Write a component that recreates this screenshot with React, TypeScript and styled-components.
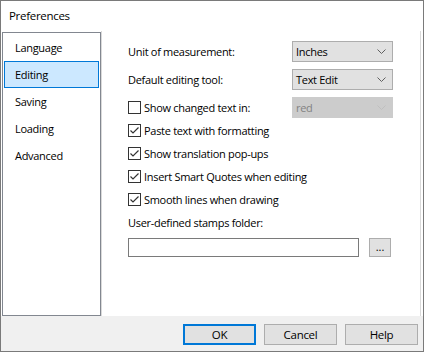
import React from "react";
import styled, { createGlobalStyle } from "styled-components";

const Global = createGlobalStyle`
  html, body { margin: 0; padding: 0; background: #ffffff; }
  body {
    font-family: "Open Sans", "Noto Sans", "Liberation Sans", sans-serif;
    font-size: 11px;
    letter-spacing: -0.3px;
    color: #000;
  }
  * { box-sizing: border-box; }
`;

const Window = styled.div`
  width: 424px;
  height: 352px;
  border: 1px solid #7a7a7a;
  background: #ffffff;
  display: flex;
  flex-direction: column;
`;

const TitleBar = styled.div`
  height: 30px;
  display: flex;
  align-items: center;
  padding-left: 8px;
  padding-bottom: 1px;
  font-size: 11.5px;
  color: #000;
`;

const Body = styled.div`
  display: flex;
  height: 285px;
  padding-left: 1px;
`;

const NavList = styled.div`
  width: 99px;
  height: 284px;
  margin-top: 1px;
  border: 1px solid #828790;
  padding: 1px;
  display: flex;
  flex-direction: column;
  background: #fff;
`;

const NavItem = styled.div<{ $selected?: boolean }>`
  height: 27px;
  display: flex;
  align-items: center;
  padding-left: 10px;
  font-size: 11px;
  border: 1px solid ${(p) => (p.$selected ? "#0078d7" : "transparent")};
  background: ${(p) => (p.$selected ? "#cce8ff" : "transparent")};
`;

const Panel = styled.div`
  width: 320px;
  height: 286px;
  border: 1px solid #dadada;
  border-top: none;
  padding: 10px 0 0 26px;
  display: flex;
  flex-direction: column;
`;

const FieldRow = styled.div<{ $tight?: boolean }>`
  height: 21px;
  margin-bottom: ${(p) => (p.$tight ? "1px" : "7px")};
  display: flex;
  align-items: center;
  justify-content: space-between;
  width: 265px;
`;

const Label = styled.span`
  font-size: 11px;
  color: #000;
`;

const Select = styled.div<{ $disabled?: boolean }>`
  width: 101px;
  height: 21px;
  border: 1px solid ${(p) => (p.$disabled ? "#cccccc" : "#adadad")};
  background: ${(p) => (p.$disabled ? "#cccccc" : "#e1e1e1")};
  color: ${(p) => (p.$disabled ? "#838383" : "#000")};
  display: flex;
  align-items: center;
  justify-content: space-between;
  padding: 0 6px 0 3px;
  font-size: 11px;
`;

const CheckRow = styled.div`
  height: 23px;
  display: flex;
  align-items: center;
  gap: 3px;
`;

const Box = styled.span`
  width: 13px;
  height: 13px;
  border: 1px solid #333333;
  background: #fff;
  display: inline-flex;
  align-items: center;
  justify-content: center;
`;

const FolderLabel = styled.div`
  height: 22px;
  display: flex;
  align-items: center;
`;

const FolderRow = styled.div`
  margin-top: 5px;
  display: flex;
  gap: 10px;
`;

const TextInput = styled.div`
  width: 231px;
  height: 19px;
  border: 1px solid #7a7a7a;
  background: #fff;
`;

const SmallButton = styled.div`
  width: 22px;
  height: 19px;
  border: 1px solid #adadad;
  background: #e1e1e1;
  display: flex;
  align-items: center;
  justify-content: center;
  font-size: 11px;
  letter-spacing: 0;
  padding-bottom: 3px;
`;

const ButtonBar = styled.div`
  flex: 1;
  background: #f0f0f0;
  display: flex;
  justify-content: flex-end;
  align-items: flex-start;
  gap: 8px;
  padding: 8px 5px 0 0;
`;

const Button = styled.div<{ $default?: boolean }>`
  width: 73px;
  height: 21px;
  border: ${(p) => (p.$default ? "2px solid #0078d7" : "1px solid #adadad")};
  background: #e1e1e1;
  display: flex;
  align-items: center;
  justify-content: center;
  font-size: 11.5px;
`;

const Chevron = ({ color }: { color: string }) => (
  <svg width="9" height="5" viewBox="0 0 9 5">
    <path d="M0.5 0.5 L4.5 4.5 L8.5 0.5" fill="none" stroke={color} strokeWidth="1" />
  </svg>
);

const Check = () => (
  <svg width="11" height="11" viewBox="0 0 11 11">
    <path d="M1.5 5.5 L4 8 L9.5 2.5" fill="none" stroke="#333" strokeWidth="1.2" />
  </svg>
);

const CheckItem = ({ checked, children }: { checked?: boolean; children: React.ReactNode }) => (
  <CheckRow>
    <Box>{checked && <Check />}</Box>
    <Label>{children}</Label>
  </CheckRow>
);

export default function App() {
  const nav = ["Language", "Editing", "Saving", "Loading", "Advanced"];
  return (
    <>
      <Global />
      <Window>
        <TitleBar>Preferences</TitleBar>
        <Body>
          <NavList>
            {nav.map((n) => (
              <NavItem key={n} $selected={n === "Editing"}>
                {n}
              </NavItem>
            ))}
          </NavList>
          <Panel>
            <FieldRow>
              <Label>Unit of measurement:</Label>
              <Select>
                Inches
                <Chevron color="#606060" />
              </Select>
            </FieldRow>
            <FieldRow>
              <Label>Default editing tool:</Label>
              <Select>
                Text Edit
                <Chevron color="#606060" />
              </Select>
            </FieldRow>
            <FieldRow $tight>
              <CheckItem>Show changed text in:</CheckItem>
              <Select $disabled>
                red
                <Chevron color="#bfbfbf" />
              </Select>
            </FieldRow>
            <CheckItem checked>Paste text with formatting</CheckItem>
            <CheckItem checked>Show translation pop-ups</CheckItem>
            <CheckItem checked>Insert Smart Quotes when editing</CheckItem>
            <CheckItem checked>Smooth lines when drawing</CheckItem>
            <FolderLabel>
              <Label>User-defined stamps folder:</Label>
            </FolderLabel>
            <FolderRow>
              <TextInput />
              <SmallButton>...</SmallButton>
            </FolderRow>
          </Panel>
        </Body>
        <ButtonBar>
          <Button $default>OK</Button>
          <Button>Cancel</Button>
          <Button>Help</Button>
        </ButtonBar>
      </Window>
    </>
  );
}
